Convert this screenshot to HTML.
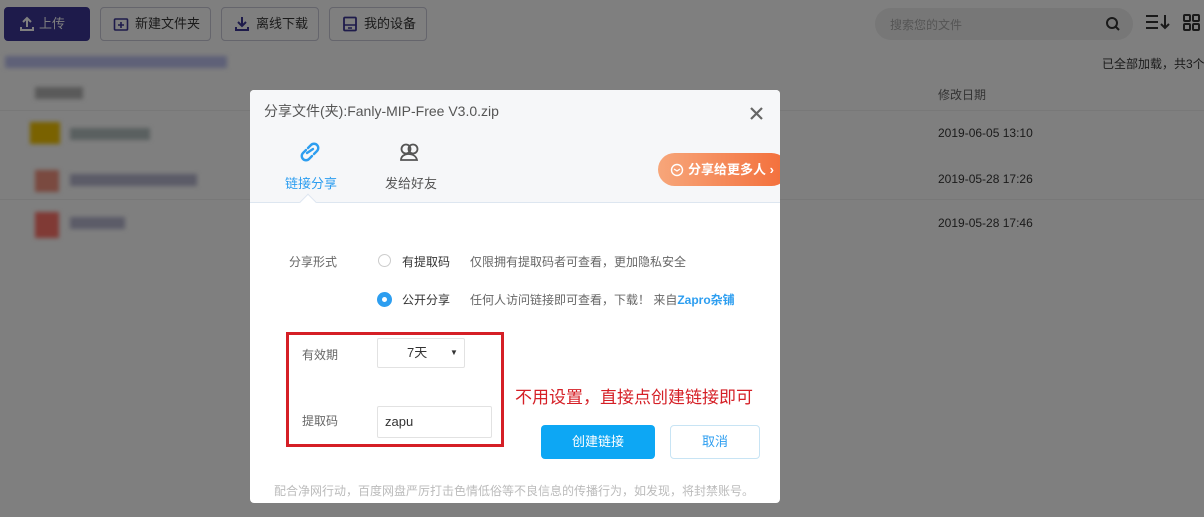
<!DOCTYPE html>
<html><head><meta charset="utf-8"><style>
*{box-sizing:border-box;margin:0;padding:0}
body{width:1204px;height:517px;overflow:hidden;background:#7f7f7f;font-family:"Liberation Sans","Noto Sans CJK SC",sans-serif;font-size:12px;color:#1a1a1a;position:relative}
.abs{position:absolute;white-space:nowrap}
.btn{position:absolute;top:7px;height:34px;border:1px solid #65656c;border-radius:4px;font-size:13px;color:#1a1a1a;line-height:32px;padding-left:34px}
.dlg{position:absolute;left:250px;top:90px;width:530px;height:413px;background:#fff;border-radius:4px;overflow:hidden}
.blur{position:absolute;height:12px;filter:blur(2px)}
</style></head><body>
<div class="btn" style="left:4px;width:86px;background:#1e1b4b;border-color:#1e1b4b;color:#7f7f7f">上传
<svg class="abs" style="left:14px;top:8px" width="16" height="16"><path d="M8 2v9M4 6l4-4 4 4M2 11v3h12v-3" stroke="#7f7f7f" stroke-width="2" fill="none"/></svg></div>
<div class="btn" style="left:100px;width:111px">新建文件夹<svg class="abs" style="left:12px;top:8px" width="16" height="16"><rect x="1.5" y="3" width="13" height="11" rx="1" stroke="#1e1b4b" stroke-width="1.6" fill="none"/><path d="M8 6v6M5 9h6" stroke="#1e1b4b" stroke-width="1.6"/></svg></div>
<div class="btn" style="left:221px;width:98px">离线下载<svg class="abs" style="left:12px;top:8px" width="16" height="16"><path d="M8 1v9M4 6l4 4 4-4M2 11v3h12v-3" stroke="#1e1b4b" stroke-width="2" fill="none"/></svg></div>
<div class="btn" style="left:329px;width:98px">我的设备<svg class="abs" style="left:12px;top:8px" width="16" height="16"><rect x="2" y="1.5" width="12" height="13" rx="1" stroke="#1e1b4b" stroke-width="1.8" fill="none"/><path d="M2 9h12M6 12h4" stroke="#1e1b4b" stroke-width="1.6"/></svg></div>
<div class="blur" style="left:5px;top:56px;width:222px;background:#5f6178"></div>
<div class="blur" style="left:35px;top:87px;width:48px;background:#5a5a5a"></div>
<div class="blur" style="left:30px;top:122px;width:30px;height:22px;background:#7a6200"></div>
<div class="blur" style="left:70px;top:128px;width:80px;background:#5a6060"></div>
<div class="blur" style="left:35px;top:170px;width:24px;height:22px;background:#7a4a40"></div>
<div class="blur" style="left:70px;top:174px;width:127px;background:#5c5c68"></div>
<div class="blur" style="left:35px;top:212px;width:24px;height:26px;background:#803a35"></div>
<div class="blur" style="left:70px;top:217px;width:55px;background:#5c5c68"></div>
<div class="abs" style="left:875px;top:8px;width:258px;height:32px;border-radius:16px;background:#777;color:#555;padding:8px 15px;font-size:12px">搜索您的文件
<svg class="abs" style="left:230px;top:8px" width="16" height="16"><circle cx="7" cy="7" r="5" stroke="#1a1a1a" stroke-width="2" fill="none"/><path d="M11 11l3 3" stroke="#1a1a1a" stroke-width="2"/></svg></div>
<svg class="abs" style="left:1144px;top:12px" width="28" height="20"><path d="M2 4h12M2 10h12M2 16h12M21 3v13M17 12l4 4 4-4" stroke="#1a1a1a" stroke-width="2" fill="none"/></svg>
<svg class="abs" style="left:1183px;top:14px" width="18" height="18"><rect x="1" y="1" width="6" height="6" rx="1" stroke="#1a1a1a" stroke-width="2" fill="none"/><rect x="10" y="1" width="6" height="6" rx="1" stroke="#1a1a1a" stroke-width="2" fill="none"/><rect x="1" y="10" width="6" height="6" rx="1" stroke="#1a1a1a" stroke-width="2" fill="none"/><rect x="10" y="10" width="6" height="6" rx="1" stroke="#1a1a1a" stroke-width="2" fill="none"/></svg>
<div class="abs" style="left:1102px;top:55px">已全部加载，共3个</div>
<div class="abs" style="left:938px;top:86px;color:#333">修改日期</div>
<div class="abs" style="left:0;top:110px;width:1204px;border-top:1px solid #787878"></div>
<div class="abs" style="left:938px;top:126px">2019-06-05 13:10</div>
<div class="abs" style="left:938px;top:172px">2019-05-28 17:26</div>
<div class="abs" style="left:0;top:199px;width:1204px;border-top:1px solid #787878"></div>
<div class="abs" style="left:938px;top:216px">2019-05-28 17:46</div>
<div class="dlg">
<div class="abs" style="left:0;top:0;width:530px;height:113px;background:#f6f7f9;border-bottom:1px solid #dde6f0"></div>
<div class="abs" style="left:52px;top:106px;width:12px;height:12px;background:#fff;border-left:1px solid #dde6f0;border-top:1px solid #dde6f0;transform:rotate(45deg)"></div>
<div class="abs" style="left:14px;top:11px;font-size:14px;color:#555">分享文件(夹):Fanly-MIP-Free V3.0.zip</div>
<svg class="abs" style="left:500px;top:17px" width="13" height="13"><path d="M1 1l11 11M12 1L1 12" stroke="#666" stroke-width="2.2"/></svg>
<svg class="abs" style="left:48px;top:52px" width="24" height="20"><path d="M10 6l3-3a4 4 0 016 6l-3 3M14 14l-3 3a4 4 0 01-6-6l3-3M9 11l6-4" stroke="#2d9ef0" stroke-width="2.4" fill="none" stroke-linecap="round"/></svg>
<div class="abs" style="left:35px;top:83px;font-size:13px;color:#2d9ef0">链接分享</div>
<svg class="abs" style="left:148px;top:52px" width="24" height="20"><circle cx="8" cy="7" r="4.5" stroke="#555" stroke-width="1.8" fill="none"/><circle cx="15" cy="7" r="4.5" stroke="#555" stroke-width="1.8" fill="none"/><path d="M3 18c0-4 4-6 7-6s8 1 9 6z" stroke="#555" stroke-width="1.8" fill="none"/></svg>
<div class="abs" style="left:135px;top:83px;font-size:13px;color:#555">发给好友</div>
<div class="abs" style="left:408px;top:63px;width:130px;height:33px;border-radius:17px;background:linear-gradient(90deg,#f7a67a,#f36e3a);color:#fff;font-size:13px;font-weight:bold;line-height:33px;padding-left:30px">分享给更多人 ›
<svg class="abs" style="left:12px;top:10px" width="14" height="14"><circle cx="7" cy="7" r="5.5" stroke="#fff" stroke-width="1.4" fill="none"/><path d="M4 6l3 2 3-2" stroke="#fff" stroke-width="1.3" fill="none"/></svg></div>
<div class="abs" style="left:39px;top:163px;color:#666">分享形式</div>
<div class="abs" style="left:128px;top:164px;width:13px;height:13px;border:1px solid #ccc;border-radius:50%"></div>
<div class="abs" style="left:152px;top:163px;color:#333">有提取码</div>
<div class="abs" style="left:220px;top:163px;color:#666">仅限拥有提取码者可查看，更加隐私安全</div>
<div class="abs" style="left:127px;top:202px;width:15px;height:15px;border-radius:50%;background:#2d9ef0"><div class="abs" style="left:5px;top:5px;width:5px;height:5px;border-radius:50%;background:#fff"></div></div>
<div class="abs" style="left:152px;top:201px;color:#333">公开分享</div>
<div class="abs" style="left:220px;top:201px;color:#666">任何人访问链接即可查看，下载！ 来自<span style="color:#2d9ef0;font-weight:bold">Zapro杂铺</span></div>
<div class="abs" style="left:36px;top:242px;width:218px;height:115px;border:3px solid #d51f26"></div>
<div class="abs" style="left:52px;top:256px;color:#666">有效期</div>
<div class="abs" style="left:127px;top:248px;width:88px;height:30px;border:1px solid #e2e2e2;border-radius:2px;line-height:28px;padding-left:29px;font-size:13px;color:#333">7天<span class="abs" style="left:72px;top:0;font-size:8px">▼</span></div>
<div class="abs" style="left:52px;top:322px;color:#666">提取码</div>
<div class="abs" style="left:127px;top:316px;width:115px;height:32px;border:1px solid #e2e2e2;border-radius:2px;line-height:30px;padding-left:7px;font-size:13px;color:#333">zapu</div>
<div class="abs" style="left:265px;top:293px;font-size:17px;color:#d51f26">不用设置，直接点创建链接即可</div>
<div class="abs" style="left:291px;top:335px;width:114px;height:34px;background:#0da7f4;border-radius:4px;color:#fff;text-align:center;line-height:34px;font-size:13px">创建链接</div>
<div class="abs" style="left:420px;top:335px;width:90px;height:34px;border:1px solid #c8e4f4;border-radius:4px;color:#2d9ef0;text-align:center;line-height:32px;font-size:13px">取消</div>
<div class="abs" style="left:24px;top:392px;color:#bbb;font-size:12px">配合净网行动，百度网盘严厉打击色情低俗等不良信息的传播行为，如发现，将封禁账号。</div>
</div>
</body></html>
